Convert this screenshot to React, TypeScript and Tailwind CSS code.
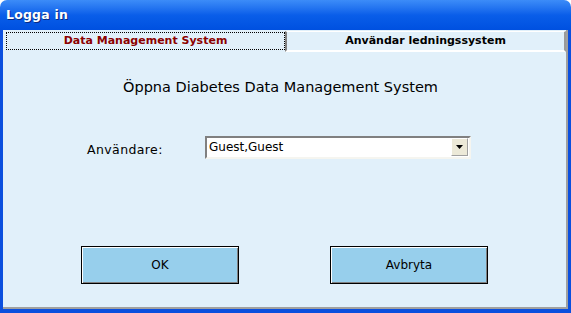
import React from "react";

export default function App() {
  const font = { fontFamily: '"DejaVu Sans", Tahoma, sans-serif' };
  return (
    <div className="w-[571px] h-[313px] flex flex-col overflow-hidden" style={font}>
      {/* title bar */}
      <div className="h-[30px] shrink-0 rounded-t-[7px] bg-gradient-to-b from-[#3c8cf8] via-[#0a5ee9] to-[#0050e0] flex items-center pl-[6px]">
        <span className="text-white font-bold text-[12.5px] [text-shadow:1px_1px_0_#0a2a80] tracking-[0.2px]">Logga in</span>
      </div>
      {/* frame */}
      <div className="flex-1 flex flex-col bg-[#0b4fde] px-[3px] pb-[4px]">
        <div className="flex-1 flex flex-col bg-[#e1f0fa] border-r-2 border-b-2 border-[#a0a0a0]">
          {/* tabs */}
          <div className="h-[21px] flex shrink-0 mt-[1px]">
            <div className="w-[282px] flex items-center justify-center pl-[3px] pt-[1px] pb-[2px]">
              <div className="w-full h-full border border-dotted border-black flex items-center justify-center">
                <span className="text-[#8b0000] font-bold text-[11px]">Data Management System</span>
              </div>
            </div>
            <div className="flex-1 flex items-center justify-center border-t border-b-2 border-white border-l-2 border-l-[#808080] border-r-2 border-r-[#9a9a9a]">
              <span className="text-black font-bold text-[11px]">Användar ledningssystem</span>
            </div>
          </div>
          {/* heading */}
          <div className="flex justify-center mt-[25px] pr-[8px]">
            <span className="text-black text-[14.5px]">Öppna Diabetes Data Management System</span>
          </div>
          {/* user row */}
          <div className="flex items-center mt-[36px]">
            <span className="ml-[84px] w-[118px] text-[12.5px] text-black tracking-[0.4px] mt-[6px]">Användare:</span>
            <div className="w-[266px] h-[23px] bg-white border-2 border-t-[#808080] border-l-[#808080] border-b-[#f5f5f0] border-r-[#f5f5f0] flex items-center">
              <span className="flex-1 pl-[2px] text-[12px] text-black">Guest,Guest</span>
              <div className="w-[17px] h-[18px] mr-[1px] bg-[#ece9d8] border border-t-white border-l-white border-b-[#a0a0a0] border-r-[#a0a0a0] flex items-center justify-center">
                <svg width="7" height="4" viewBox="0 0 7 4"><path d="M0 0h7L3.5 4z" fill="#000" /></svg>
              </div>
            </div>
          </div>
          {/* buttons */}
          <div className="flex mt-[86px]">
            <button className="ml-[78px] w-[158px] h-[38px] bg-[#97cfec] border border-black shadow-[inset_1px_1px_0_#fff,inset_-1px_-1px_0_#808080] text-[12px] text-black">OK</button>
            <button className="ml-[91px] w-[158px] h-[38px] bg-[#97cfec] border border-black shadow-[inset_1px_1px_0_#fff,inset_-1px_-1px_0_#808080] text-[12px] text-black">Avbryta</button>
          </div>
        </div>
      </div>
    </div>
  );
}
